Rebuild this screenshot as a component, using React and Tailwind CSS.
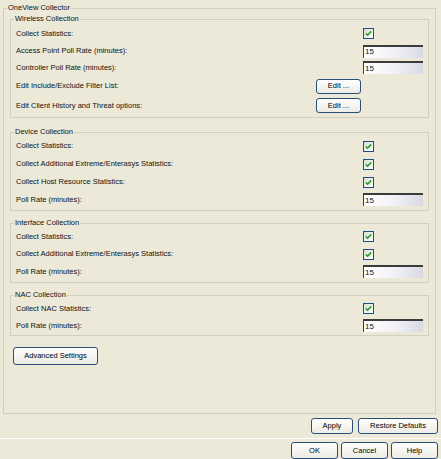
const FONT = "font-['Liberation_Sans',Arial,sans-serif]";

function Check() {
  return (
    <span className="w-[11px] h-[11px] border border-[#1c5180] bg-gradient-to-br from-[#dcdcd7] to-white flex items-center justify-center">
      <svg width="7" height="7" viewBox="0 0 7 7">
        <path d="M0.8 3.4 L2.6 5.2 L6.2 1.4" fill="none" stroke="#21a121" strokeWidth="1.6" />
      </svg>
    </span>
  );
}

function Field({ value }) {
  return (
    <span className="w-[60px] h-[13px] border-t-2 border-l border-t-[#3c3c3c] border-l-[#3c3c3c] bg-gradient-to-r from-white via-[#f2f2f6] to-[#d9d9e6] flex items-center pl-[1px] text-[8px] leading-none">
      {value}
    </span>
  );
}

function Btn({ children, className }) {
  return (
    <button
      className={
        "border border-[#2a4f7c] rounded-[3px] bg-gradient-to-b from-white to-[#ecebe4] flex items-center justify-center text-[7.5px] text-black " +
        className
      }
    >
      {children}
    </button>
  );
}

function Row({ label, h, children }) {
  return (
    <div className={"flex items-center justify-between pl-[5px] pr-[5px] " + h}>
      <span>{label}</span>
      {children}
    </div>
  );
}

function Group({ title, className, children }) {
  return (
    <fieldset className={"border border-[#d0d0bf] mx-[6px] " + className}>
      <legend className="ml-[3px] px-[1px] leading-[10px]">{title}</legend>
      {children}
    </fieldset>
  );
}

export default function App() {
  return (
    <div className={"w-[441px] h-[459px] bg-[#ece9d8] pt-[3px] text-[7.5px] text-[#111] flex flex-col " + FONT}>
      <fieldset className="h-[411px] ml-[3px] mr-[5px] border border-[#d0d0bf]">
        <legend className="ml-[3px] px-[1px] leading-[10px]">OneView Collector</legend>

        <Group title="Wireless Collection" className="mt-[1px] pb-[2px]">
          <Row label="Collect Statistics:" h="h-[19px]">
            <span className="w-[60px] flex">
              <Check />
            </span>
          </Row>
          <Row label="Access Point Poll Rate (minutes):" h="h-[16px]">
            <Field value="15" />
          </Row>
          <Row label="Controller Poll Rate (minutes):" h="h-[17px]">
            <Field value="15" />
          </Row>
          <Row label="Edit Include/Exclude Filter List:" h="h-[20px]">
            <span className="w-[107px] flex">
              <Btn className="w-[45px] h-[15px]">Edit ...</Btn>
            </span>
          </Row>
          <Row label="Edit Client History and Threat options:" h="h-[19px]">
            <span className="w-[107px] flex">
              <Btn className="w-[45px] h-[15px]">Edit ...</Btn>
            </span>
          </Row>
        </Group>

        <Group title="Device Collection" className="mt-[9px] pb-[2px]">
          <Row label="Collect Statistics:" h="h-[18px]">
            <span className="w-[60px] flex">
              <Check />
            </span>
          </Row>
          <Row label="Collect Additional Extreme/Enterasys Statistics:" h="h-[18px]">
            <span className="w-[60px] flex">
              <Check />
            </span>
          </Row>
          <Row label="Collect Host Resource Statistics:" h="h-[18px]">
            <span className="w-[60px] flex">
              <Check />
            </span>
          </Row>
          <Row label="Poll Rate (minutes):" h="h-[17px]">
            <Field value="15" />
          </Row>
        </Group>

        <Group title="Interface Collection" className="mt-[7px] pb-[2px]">
          <Row label="Collect Statistics:" h="h-[17px]">
            <span className="w-[60px] flex">
              <Check />
            </span>
          </Row>
          <Row label="Collect Additional Extreme/Enterasys Statistics:" h="h-[18px]">
            <span className="w-[60px] flex">
              <Check />
            </span>
          </Row>
          <Row label="Poll Rate (minutes):" h="h-[17px]">
            <Field value="15" />
          </Row>
        </Group>

        <Group title="NAC Collection" className="mt-[7px] pb-[1px]">
          <Row label="Collect NAC Statistics:" h="h-[17px]">
            <span className="w-[60px] flex">
              <Check />
            </span>
          </Row>
          <Row label="Poll Rate (minutes):" h="h-[17px]">
            <Field value="15" />
          </Row>
        </Group>

        <div className="mt-[11px] ml-[9px] flex">
          <Btn className="w-[85px] h-[18px]">Advanced Settings</Btn>
        </div>
      </fieldset>

      <div className="mt-[4px] h-[16px] flex justify-end gap-[5px] pr-[3px]">
        <Btn className="w-[42px] h-[16px]">Apply</Btn>
        <Btn className="w-[80px] h-[16px]">Restore Defaults</Btn>
      </div>

      <div className="mt-[4px] h-[1px] bg-white" />

      <div className="mt-[3px] h-[17px] flex justify-end gap-[3px] pr-[3px]">
        <Btn className="w-[47px] h-[17px]">OK</Btn>
        <Btn className="w-[47px] h-[17px]">Cancel</Btn>
        <Btn className="w-[47px] h-[17px]">Help</Btn>
      </div>
    </div>
  );
}
